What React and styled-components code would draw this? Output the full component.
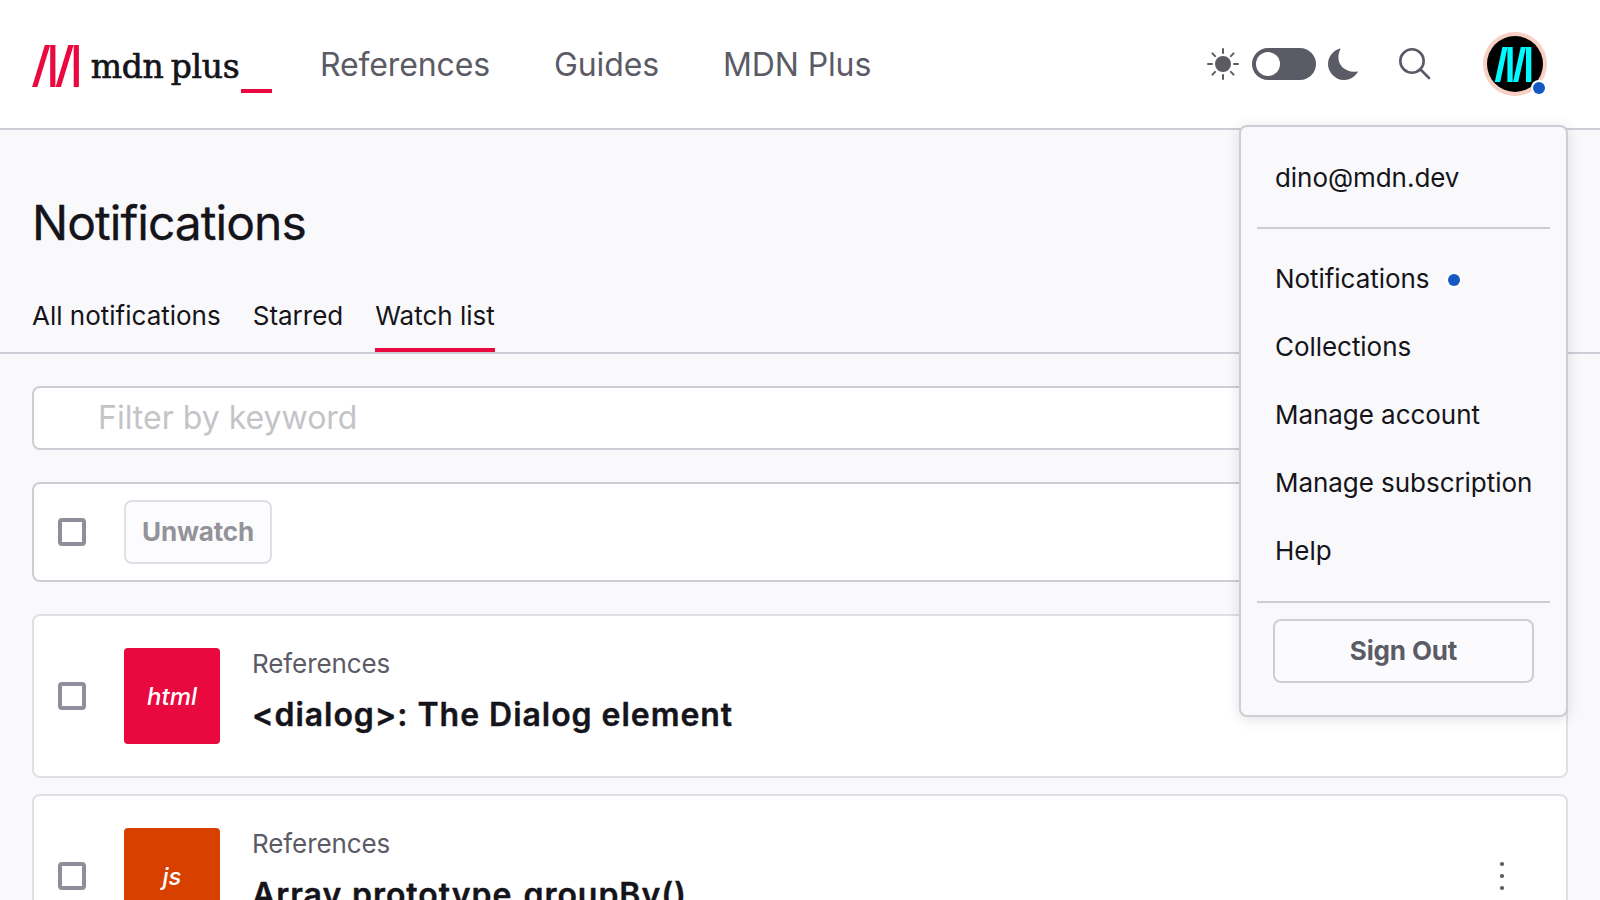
import React from 'react';
import styled, { createGlobalStyle, ThemeProvider } from 'styled-components';

const theme = {
  text: '#15141a',
  muted: '#5b5b66',
  page: '#f9f9fb',
  line: '#cdcdd6',
  lineSoft: '#dfdfe6',
  red: '#e9093e',
  orange: '#d84000',
  blue: '#1459c3',
};

const GlobalStyle = createGlobalStyle`
  *, *::before, *::after { box-sizing: border-box; }
  body {
    margin: 0;
    height: 900px;
    overflow: hidden;
    background: ${theme.page};
    color: ${theme.text};
    font: 400 26px/39px Inter, "Liberation Sans", sans-serif;
  }
  a { color: inherit; text-decoration: none; }
  h1, h2, p, ul { margin: 0; padding: 0; }
  ul { list-style: none; }
  svg { display: block; flex: none; }
  button, input { font: inherit; }
`;

const Header = styled.header`
  position: relative;
  z-index: 2;
  display: flex;
  align-items: center;
  justify-content: space-between;
  height: 130px;
  padding: 0 53px 2px 32px;
  background: #fff;
  border-bottom: 2px solid ${(p) => p.theme.line};
`;

const HeaderLeft = styled.div`
  display: flex;
  align-items: center;
`;

const Nav = styled.nav`
  display: flex;
  gap: 64px;
  margin-left: 48px;
  padding-top: 4px;
  font-size: 32px;
  line-height: 48px;
  letter-spacing: -0.12px;
  color: ${(p) => p.theme.muted};
`;

const Tools = styled.div`
  display: flex;
  align-items: center;
  padding-top: 2px;
  color: ${(p) => p.theme.muted};
`;

const ThemeSwitch = styled.div`
  display: flex;
  align-items: center;
  gap: 12px;
  margin-right: 39px;
`;

const SwitchTrack = styled.button`
  display: flex;
  align-items: center;
  width: 64px;
  height: 32px;
  margin-left: 1px;
  padding: 0 4px;
  border: 0;
  border-radius: 16px;
  background: ${(p) => p.theme.muted};

  &::after {
    content: '';
    width: 24px;
    height: 24px;
    border-radius: 50%;
    background: #fff;
  }
`;

const AvatarButton = styled.div`
  position: relative;
  margin-left: 52px;
`;

const Dot = styled.span`
  flex: none;
  width: 12px;
  height: 12px;
  border-radius: 50%;
  background: ${(p) => p.theme.blue};
  box-shadow: 0 0 0 2px #fff;
`;

const AvatarDot = styled(Dot)`
  position: absolute;
  right: 2px;
  bottom: 2px;
`;

const MenuDot = styled(Dot)`
  margin: 4px 0 0 1px;
`;

const Menu = styled.div`
  position: absolute;
  top: 125px;
  right: 32px;
  width: 329px;
  padding: 0 16px 32px;
  background: ${(p) => p.theme.page};
  border: 2px solid ${(p) => p.theme.line};
  border-radius: 8px;
  box-shadow: 0 2px 14px rgba(0, 0, 0, 0.12);
`;

const MenuGroup = styled.ul`
  padding: 16px 0;
  border-bottom: 2px solid ${(p) => p.theme.line};
`;

const MenuItem = styled.li`
  display: flex;
  align-items: center;
  gap: 18px;
  height: 68px;
  padding: 0 18px;
  white-space: nowrap;
  letter-spacing: -0.05px;
`;

const MenuLink = styled(MenuItem)`
  padding-bottom: 2px;
`;

const Button = styled.button`
  height: 64px;
  padding: 0 16px 1px;
  border: 2px solid ${(p) => p.theme.line};
  border-radius: 8px;
  background: #fbfbfe;
  color: ${(p) => p.theme.muted};
  font-weight: 700;
  line-height: 39px;
  letter-spacing: -0.15px;

  &:disabled {
    border-color: ${(p) => p.theme.lineSoft};
    background: #fcfcfe;
    color: #939399;
  }
`;

const SignOut = styled(Button)`
  display: block;
  width: 261px;
  margin: 16px auto 0;
`;

const PageHead = styled.section`
  padding: 64px 32px 0;
  border-bottom: 2px solid ${(p) => p.theme.line};
`;

const Title = styled.h1`
  font-size: 48px;
  font-weight: 400;
  line-height: 57px;
  letter-spacing: -0.96px;
  -webkit-text-stroke: 0.3px currentColor;
`;

const Tabs = styled.nav`
  display: flex;
  gap: 32px;
  margin-top: 45px;
`;

const Tab = styled.a`
  padding-bottom: 13px;
  border-bottom: 4px solid ${(p) => (p.$active ? p.theme.red : 'transparent')};
`;

const Content = styled.main`
  display: flex;
  flex-direction: column;
  gap: 32px;
  padding: 32px 32px 0;
`;

const Filter = styled.input`
  width: 100%;
  height: 64px;
  padding: 0 64px 2px;
  border: 2px solid ${(p) => p.theme.line};
  border-radius: 8px;
  background: #fff;
  font-size: 32px;
  outline: none;

  &::placeholder {
    color: #c4c4c8;
    opacity: 1;
  }
`;

const Toolbar = styled.div`
  display: flex;
  align-items: center;
  gap: 38px;
  height: 100px;
  padding: 0 24px;
  background: #fff;
  border: 2px solid ${(p) => p.theme.line};
  border-radius: 8px;
`;

const Checkbox = styled.input.attrs({ type: 'checkbox' })`
  appearance: none;
  flex: none;
  width: 28px;
  height: 28px;
  margin: 0;
  border: 4px solid #8f8d9e;
  border-radius: 4px;
  background: #fff;
`;

const CardList = styled.ul`
  display: flex;
  flex-direction: column;
  gap: 16px;
`;

const Card = styled.li`
  display: flex;
  align-items: center;
  height: 164px;
  padding: 0 60px 0 24px;
  background: #fff;
  border: 2px solid ${(p) => p.theme.lineSoft};
  border-radius: 8px;
`;

const Tile = styled.div`
  display: flex;
  align-items: center;
  justify-content: center;
  width: 96px;
  height: 96px;
  margin: 0 32px 0 38px;
  border-radius: 4px;
  background: ${(p) => p.theme[p.$tone]};
  color: #fff;
  font-size: 24px;
  font-style: italic;
  font-weight: 500;
`;

const CardText = styled.div`
  flex: 1;
  padding-bottom: 10px;
`;

const Kind = styled.p`
  color: ${(p) => p.theme.muted};
  letter-spacing: -0.1px;
`;

const CardTitle = styled.h2`
  margin-top: 8px;
  font-size: 32px;
  font-weight: 600;
  line-height: 48px;
  letter-spacing: 0.96px;
  -webkit-text-stroke: 0.4px currentColor;
  white-space: nowrap;
`;

const Wordmark = styled.text`
  font-family: 'DejaVu Serif', serif;
  font-size: 33px;
  fill: ${(p) => p.theme.text};
  stroke: ${(p) => p.theme.text};
  stroke-width: 0.7px;
  word-spacing: -3px;
`;

const Logo = () => (
  <svg width="240" height="64" viewBox="32 32 240 64">
    <g fill={theme.red}>
      <path d="M44.9 45H50.2L37.4 87H32.1Z" />
      <path d="M50.2 45H55.4V87H50.2Z" />
      <path d="M68.3 45H73.6L60.9 87H55.6Z" />
      <path d="M73.7 45H78.9V87H73.7Z" />
      <path d="M241 89H272V93H241Z" />
    </g>
    <Wordmark x="90.8" y="78.4" textLength="148.8" lengthAdjust="spacing">
      mdn plus
    </Wordmark>
  </svg>
);

const LogoLink = styled.a`
  padding-top: 2px;
`;

const Sun = () => (
  <svg width="32" height="32" viewBox="-16 -16 32 32">
    <circle r="8" fill="currentColor" />
    <path
      d="M0-15V-11M0 11V15M-15 0H-11M11 0H15M-10.6-10.6L-7.9-7.9M10.6-10.6L7.9-7.9M-10.6 10.6L-7.9 7.9M10.6 10.6L7.9 7.9"
      stroke="currentColor"
      strokeWidth="2"
      strokeLinecap="round"
    />
  </svg>
);

const Moon = () => (
  <svg width="32" height="32" viewBox="0 0 32 32">
    <path
      d="M11.2.73A16 16 0 1 0 29.35 24.85C30.2 23.8 29.9 23.3 29 23.5C19.3 25.2 10.4 18.8 10.4 9.6C10.4 6.8 11 4.2 12.2 1.8C12.7.6 12.3.3 11.2.73Z"
      fill="currentColor"
    />
  </svg>
);

const Search = () => (
  <svg width="32" height="32" viewBox="0 0 32 32" fill="none" stroke="currentColor" strokeWidth="2.6">
    <circle cx="13" cy="13" r="11.7" />
    <path d="M21.5 21.5L30 30" strokeLinecap="round" />
  </svg>
);

const Avatar = () => (
  <svg width="64" height="64" viewBox="1483 32 64 64">
    <circle cx="1515" cy="64" r="32" fill="#f7d0c3" />
    <circle cx="1515" cy="64" r="28" fill="#000" />
    <g fill="#00fbff">
      <path d="M1502.4 47H1507.6L1500.2 82H1494.8Z" />
      <path d="M1507.4 47H1512.7V82H1507.4Z" />
      <path d="M1520.8 47H1526L1518.2 82H1513Z" />
      <path d="M1526 47H1531.3V82H1526Z" />
    </g>
  </svg>
);

const More = () => (
  <svg width="8" height="32" viewBox="-4 -16 8 32" fill={theme.muted}>
    <circle cy="-12" r="2.1" />
    <circle r="2.1" />
    <circle cy="12" r="2.1" />
  </svg>
);

const cards = [
  { tile: 'html', tone: 'red', kind: 'References', title: '<dialog>: The Dialog element' },
  { tile: 'js', tone: 'orange', kind: 'References', title: 'Array.prototype.groupBy()' },
];

const menuItems = ['Notifications', 'Collections', 'Manage account', 'Manage subscription', 'Help'];

export default function App() {
  return (
    <ThemeProvider theme={theme}>
      <GlobalStyle />
      <Header>
        <HeaderLeft>
          <LogoLink>
            <Logo />
          </LogoLink>
          <Nav>
            <a>References</a>
            <a>Guides</a>
            <a>MDN Plus</a>
          </Nav>
        </HeaderLeft>
        <Tools>
          <ThemeSwitch>
            <Sun />
            <SwitchTrack aria-label="Theme" />
            <Moon />
          </ThemeSwitch>
          <Search />
          <AvatarButton>
            <Avatar />
            <AvatarDot />
          </AvatarButton>
        </Tools>
        <Menu>
          <MenuGroup>
            <MenuItem>dino@mdn.dev</MenuItem>
          </MenuGroup>
          <MenuGroup>
            {menuItems.map((label) => (
              <MenuLink key={label}>
                {label}
                {label === 'Notifications' && <MenuDot />}
              </MenuLink>
            ))}
          </MenuGroup>
          <SignOut>Sign Out</SignOut>
        </Menu>
      </Header>
      <PageHead>
        <Title>Notifications</Title>
        <Tabs>
          <Tab>All notifications</Tab>
          <Tab>Starred</Tab>
          <Tab $active>Watch list</Tab>
        </Tabs>
      </PageHead>
      <Content>
        <Filter placeholder="Filter by keyword" />
        <Toolbar>
          <Checkbox />
          <Button disabled>Unwatch</Button>
        </Toolbar>
        <CardList>
          {cards.map((card) => (
            <Card key={card.title}>
              <Checkbox />
              <Tile $tone={card.tone}>{card.tile}</Tile>
              <CardText>
                <Kind>{card.kind}</Kind>
                <CardTitle>{card.title}</CardTitle>
              </CardText>
              <More />
            </Card>
          ))}
        </CardList>
      </Content>
    </ThemeProvider>
  );
}
